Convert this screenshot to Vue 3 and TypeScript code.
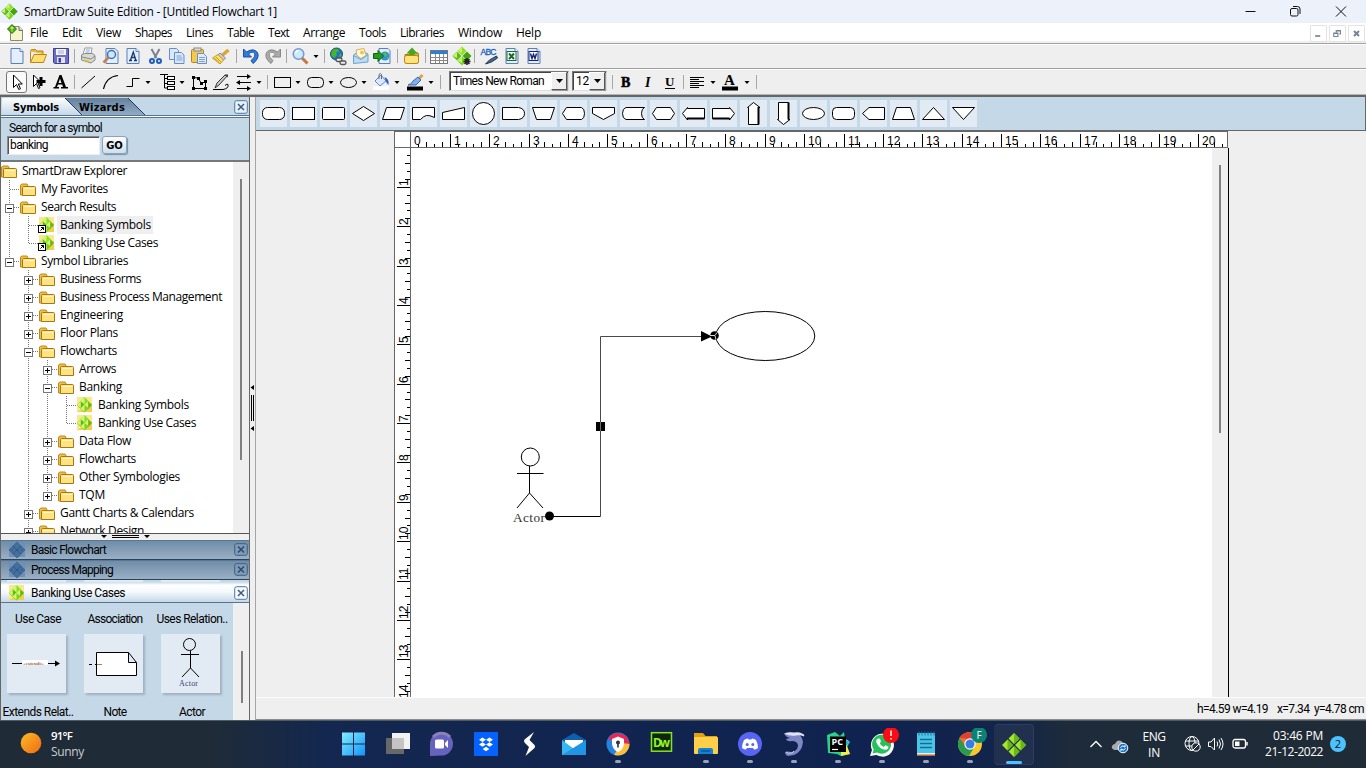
<script setup lang="ts">
interface Tool { i: string; w: number }
interface Row { g: string; icon: string; t: string; w: number; e?: string; sel?: boolean }

// Spreads a label over a known width by adjusting its letter spacing.
const vFit = {
  mounted(el: HTMLElement, b: { value: number }) {
    const n = (el.textContent || '').trim().length
    const natural = el.getBoundingClientRect().width
    el.style.letterSpacing = ((b.value - natural) / n).toFixed(3) + 'px'
  },
}

const menus: [string, number][] = [
  ['File', 18], ['Edit', 20], ['View', 25], ['Shapes', 37], ['Lines', 27], ['Table', 27],
  ['Text', 21], ['Arrange', 42], ['Tools', 27], ['Libraries', 44], ['Window', 44], ['Help', 25],
]

const page = '<path d="M5 3.500h9l3 3V18.500H5z" fill="#e3efff" stroke="#5c7fb8"/><path d="M14 3.500v3h3" fill="#fff" stroke="#5c7fb8"/>'
const folder = '<path d="M2.500 6.500q0-2 2-2h3l1.500 1.500h6v3" fill="#e9b93d" stroke="#b98516"/><path d="M2.500 7v10.500h13l3-8H6l-3 7" fill="#ffdf72" stroke="#b98516"/>'
const diamonds = '<path d="M11 1.500l4.500 4.500-4.500 4.500L6.500 6z" fill="#8ee02c"/><path d="M6 6.500l4.500 4.500L6 15.500 1.500 11z" fill="#5bbd12"/><path d="M16 6.500l4.500 4.500-4.500 4.500-4.500-4.500z" fill="#43a40d"/><path d="M11 11.500l4.500 4.500-4.500 4.500L6.500 16z" fill="#74d41b"/><path d="M11 1.500V8L7 6zM6 6.500V13l-4-2zM11 11.500V18l-4-2z" fill="#c6f36a"/>'

const icons: Record<string, string> = {
  new: page,
  open: folder,
  save: '<path d="M3.500 3.500h15v15h-14l-1-1z" fill="#6b6fc9" stroke="#40408f"/><rect x="6" y="4" width="10" height="6" fill="#f4f4ff"/><path d="M8 6h6M8 8h6" stroke="#aab"/><rect x="7" y="12" width="8" height="6" fill="#dfe3f2"/><rect x="8.500" y="13" width="2.500" height="4.500" fill="#40408f"/>',
  print: '<path d="M6 9l2-6h7l-1 6" fill="#fff" stroke="#999"/><path d="M9 5h4M8.500 7h4" stroke="#79a6dd"/><path d="M4.500 10l3-1.500h8l2.500 2v4.500l-4 3-9.500-3z" fill="#d9d9d4" stroke="#888"/><path d="M5 12l9 2 4-3" fill="none" stroke="#888"/><path d="M7 15l5 1.500" stroke="#e3c32c" stroke-width="1.500"/>',
  preview: '<path d="M6 3.500h9l3 3V18.500H6z" fill="#e3efff" stroke="#5c7fb8"/><circle cx="11.500" cy="9.500" r="4" fill="#c8ecff" stroke="#4a6fae" stroke-width="1.500"/><path d="M8.500 12.500l-5 5" stroke="#c77f4d" stroke-width="2.500"/>',
  fonta: page + '<path d="M7 15.500h3M12 15.500h3M8.500 15l2.800-8 2.500 8M9.500 12.500h3.500" fill="none" stroke="#19356e" stroke-width="1.300"/>',
  cut: '<path d="M7.500 4l5 9M15.500 4l-5 9" stroke="#7a8290" stroke-width="2"/><circle cx="8" cy="16" r="2" fill="none" stroke="#1d5dbb" stroke-width="2"/><circle cx="15" cy="16" r="2" fill="none" stroke="#1d5dbb" stroke-width="2"/>',
  copy: '<path d="M3.500 3.500h7l2 2v9h-9z" fill="#d9e8fd" stroke="#6b8cc0"/><path d="M8.500 7.500h7l2.500 2.500v8.500H8.500z" fill="#d9e8fd" stroke="#6b8cc0"/><path d="M10.500 11h5M10.500 13h6M10.500 15h6" stroke="#7da1d6"/>',
  paste: '<rect x="3.500" y="4.500" width="12" height="13" rx="1" fill="#f3c94f" stroke="#b08320"/><rect x="6" y="3" width="7" height="3" fill="#dcdcdc" stroke="#888"/><path d="M9.500 8.500h6l3 3v7h-9z" fill="#e0ecff" stroke="#6b8cc0"/><path d="M11 12.500h6M11 14.500h6M11 16.500h6" stroke="#7da1d6"/>',
  brush: '<path d="M18.500 5l-6 5" stroke="#d9a72f" stroke-width="3.500"/><path d="M10 8l5.500 5-2 2-5.500-5z" fill="#ccd" stroke="#889"/><path d="M8 9.500l5.500 5.500-3.500 4-7.500-6z" fill="#fbe268" stroke="#c79b23"/><path d="M6 12l5 5M4.500 13l4.500 4.500" stroke="#c79b23"/>',
  undo: '<path d="M3.500 4v8h8l-3-3q4-3.500 6-.5 1.500 3-3.500 7l2 3q7-5.500 4.500-11-4-5-11-.5z" fill="#347bd4" stroke="#1754a5"/>',
  redo: '<path d="M18.500 4v8h-8l3-3q-4-3.500-6-.5-1.500 3 3.500 7l-2 3q-7-5.500-4.500-11 4-5 11-.5z" fill="#aaa" stroke="#888"/>',
  mag: '<path d="M12.500 12.500l6 6" stroke="#c9763c" stroke-width="3"/><circle cx="9.500" cy="9" r="5.300" fill="#c7ecff" stroke="#7e96cd" stroke-width="1.500"/><path d="M6.500 8q1-2.500 3-2.500" stroke="#fff" fill="none" stroke-width="1.500"/>',
  globe: '<circle cx="8.500" cy="9" r="6" fill="#2474c5" stroke="#155"/><path d="M4 6q2-3 6-2l1 2-3 2 1 2-3 3-3-3zM12 8l2 2-3 3z" fill="#46b332"/><g fill="#eee" stroke="#555" stroke-width="1.300"><rect x="8" y="13" width="6" height="3.500" rx="1.700"/><rect x="12" y="16" width="6" height="3.500" rx="1.700"/></g>',
  mail: '<path d="M3.500 10l7-5 7.500 4v8l-14.500 1.500z" fill="#b9dcf8" stroke="#739fca"/><path d="M6 5l8-1.500 2 7-5 3-4-3z" fill="#fffbe0" stroke="#d8b060"/><circle cx="12" cy="7.500" r="2" fill="#f6c145"/><path d="M3.500 10.500l7.500 4 7-5" fill="none" stroke="#739fca"/>',
  export: '<path d="M7 3.500h9l2 2V18.500H7z" fill="#e3efff" stroke="#5c7fb8"/><circle cx="13" cy="11" r="4.500" fill="#338fe0"/><path d="M11 9l3-2 1 3-2 2zM15 12l2 1-2 2z" fill="#54bf43"/><path d="M1.500 8.500h4.500v-3l5.500 5.500-5.500 5.500v-3h-4.500z" fill="#229b1f" stroke="#0c610f"/>',
  upfold: '<path d="M4 9.500h4l1-2h6.500q2 0 2 2v7q0 2-2 2H6q-2 0-2-2z" fill="#e0ad2f" stroke="#a97c12"/><rect x="3.500" y="10.500" width="14" height="8" rx="2" fill="#ffe37a" stroke="#b98516"/><path d="M5.500 8.500l5.500-6 5.500 6h-3V10H8.500V8.500z" fill="#47a61e"/>',
  table: '<rect x="2.500" y="5.500" width="17" height="13" fill="#fff" stroke="#777"/><rect x="3" y="6" width="16" height="3" fill="#2c7fd9"/><path d="M3 12.500h16M3 15.500h16M7.500 9v9M11.500 9v9M15.500 9v9" stroke="#888"/>',
  green: diamonds + '<path d="M13.500 14l5 5M18.500 14l-5 5M16 13v7M12.500 16.500h7" stroke="#222" stroke-width="1.600"/>',
  abc: '<text x="2.500" y="10" font-size="8.500" font-family="Liberation Sans" fill="#1463be" textLength="16" stroke="#1463be" stroke-width=".3">ABC</text><path d="M18.500 11l-7 4-4 4 6-2 6-4z" fill="#456c99" stroke="#234"/>',
  excel: page + '<rect x="6" y="6.500" width="9" height="9" fill="#fff" stroke="#176b2c"/><path d="M8 8.500l5 5.500M13 8.500l-5 5.500" stroke="#176b2c" stroke-width="2"/>',
  word: page + '<rect x="6" y="6.500" width="9" height="9" fill="#fff" stroke="#17267c"/><path d="M7.500 8.500l1.500 5 1.500-4 1.500 4 1.500-5" fill="none" stroke="#17267c" stroke-width="1.500"/>',
  caret: '<path d="M8.500 10h5l-2.500 3z"/>',
  sep: '<path d="M11.500 4v14" stroke="#a6a6a6"/>',
  ptr: '<rect x=".5" y=".5" width="20" height="21" rx="2.500" fill="#fafafa" stroke="#777"/><path d="M7.500 4v12.500l3-3 2.300 5 1.700-.8-2.200-4.700h4z" fill="#fff" stroke="#000"/>',
  ptrplus: '<path d="M5.500 4v11.500l3-3 2 5 1.500-.7-2-4.800h3.500z" fill="#fff" stroke="#000"/><path d="M13 6v9M8.500 10.500h9" stroke="#000" stroke-width="3"/>',
  bigA: '<path d="M11.500 4l4.500 12h2v1.500h-7V16h2l-.8-2.500H8L7 16h2v1.500H3.500V16H5l4.500-12zM10 7.500L8.500 12h3z"/>',
  line: '<path d="M4.500 17L18 5" stroke="#000"/>',
  arc: '<path d="M3.500 18Q6 6 18 4.500" fill="none" stroke="#000" stroke-width="1.200"/>',
  conn: '<path d="M4.500 15.500h6v-8h7" fill="none" stroke="#000"/>',
  tree: '<g fill="#fff" stroke="#000" transform="translate(4 0)"><path d="M2 3.500h8M6.500 4v13h5M6.500 7.500h3M6.500 12.500h3" fill="none"/><rect x="9.500" y="5.500" width="7" height="3"/><rect x="9.500" y="10.500" width="7" height="3"/><rect x="9.500" y="15.500" width="7" height="3"/></g>',
  poly: '<path d="M5.500 6.500v11h12v-7l-4 2L10 7z" fill="none" stroke="#000"/><rect x="4" y="5" width="3" height="3"/><rect x="4" y="16" width="3" height="3"/><rect x="9" y="6" width="3" height="3"/><rect x="12" y="11" width="3" height="3"/><rect x="16" y="9" width="3" height="3"/><rect x="16" y="16" width="3" height="3"/>',
  pen: '<path d="M17 4L8 14l-4 3 2-5 8-8zM14 4l3 2" fill="#ccc" stroke="#333"/><path d="M2 18.500h10q6-1 5-5-1-1-3 1" fill="none" stroke="#000"/>',
  arrows: '<path d="M4 5.500h13M4 11.500h14M4 17.500h13" stroke="#000"/><path d="M14 3l4 2.500L14 8zM7 9l-4 2.500L7 14zM14 15l4 2.500-4 2.500z"/>',
  rect: '<rect x="3.500" y="6.500" width="16" height="10" fill="none" stroke="#000"/>',
  rrect: '<rect x="3.500" y="6.500" width="16" height="10" rx="4" fill="none" stroke="#000"/>',
  oval: '<ellipse cx="11.500" cy="11.500" rx="8" ry="5" fill="none" stroke="#000"/>',
  bucket: '<rect x="3" y="15" width="16" height="4" fill="#fff"/><path d="M5 10l6-6 5 6-6 5z" fill="#d9e8fb" stroke="#6288c4"/><path d="M9 8V3.500q1.500-2 2.500 0V8" fill="none" stroke="#667"/><path d="M14.500 6q5 2 4 8-2-1-3-5z" fill="#2b5fc4"/>',
  inkpen: '<rect x="3" y="15.500" width="16" height="4"/><path d="M18.500 4l-4 4" stroke="#d8a444" stroke-width="3"/><path d="M14 6l3 3-5 5H4q4-1 5-4z" fill="#7fb0f0" stroke="#3767b1"/>',
  B: '<text x="6" y="16" font-family="Liberation Serif" font-weight="bold" font-size="14" stroke="#000" stroke-width=".5">B</text>',
  I: '<text x="8" y="16" font-family="Liberation Serif" font-weight="bold" font-style="italic" font-size="14">I</text>',
  U: '<text x="6" y="15" font-family="Liberation Serif" font-weight="bold" font-size="13">U</text><path d="M6 17.500h10" stroke="#000"/>',
  align: '<path d="M4 6.500h14M4 8.500h9M4 10.500h14M4 12.500h9M4 14.500h14M4 16.500h9" stroke="#000"/>',
  fontcol: '<text x="5" y="14" font-family="Liberation Serif" font-weight="bold" font-size="15">A</text><rect x="3" y="15.500" width="16" height="4"/>',
}

const tools = (s: string): Tool[] => s.split(' ').map((p) => {
  const [i, w] = p.split(':')
  return { i, w: Number(w) }
})
const bar1 = tools('new:22 open:22 save:22 sep:4 print:24 preview:22 fonta:22 cut:22 copy:22 paste:22 brush:22 sep:8 undo:22 redo:22 sep:4 mag:24 caret:8 sep:8 globe:22 mail:22 export:22 sep:6 upfold:24 sep:2 table:26 green:20 sep:4 abc:26 excel:20 word:24')
const bar2 = tools('ptr:22 ptrplus:22 bigA:22 sep:4 line:24 arc:22 conn:22 caret:8 tree:26 caret:8 poly:26 pen:20 arrows:24 caret:6 sep:10 rect:20 caret:12 rrect:22 caret:10 oval:24 caret:8 bucket:26 caret:6 inkpen:30 caret:2 sep:16')
const bar3 = tools('sep:8 B:20 I:24 U:20 sep:6 align:22 caret:10 fontcol:24 caret:10 sep:8')

const S = 'fill="#fff" stroke="#000"'
const shapes: string[] = [
  `<rect x="2.500" y="7.500" width="22" height="12" rx="5" ${S}/>`,
  `<rect x="2.500" y="7.500" width="22" height="12" ${S}/>`,
  `<rect x="2.500" y="7.500" width="22" height="12" rx="1" ${S}/>`,
  `<path d="M2.500 13.500l11-7 11 7-11 7z" ${S}/>`,
  `<path d="M6.500 7.500h18l-4 12h-18z" ${S}/>`,
  `<path d="M2.500 7.500h22v10q-5-2.500-8-2t-6 4h-8z" ${S}/>`,
  `<path d="M2.500 12.500l22-5v12h-22z" ${S}/>`,
  `<circle cx="13.500" cy="13.500" r="11" ${S}/>`,
  `<path d="M2.500 7.500h16q6 1 6 6t-6 6h-16z" ${S}/>`,
  `<path d="M2.500 7.500h22l-4 12h-14z" ${S}/>`,
  `<path d="M6.500 7.500h15q3 1 3 6t-3 6h-15l-4-6z" ${S}/>`,
  `<path d="M2.500 7.500h22v6l-11 6-11-6z" ${S}/>`,
  `<path d="M6 7.500h18.500q-3 1-3 6t3 6H6q-3.500-1-3.500-6t3.500-6z" ${S}/>`,
  `<path d="M6.500 7.500h14l4 6-4 6h-14l-4-6z" ${S}/>`,
  `<path d="M24.500 8.500v10h-17v1.500l-5-6.500 5-6v1z" ${S}/><path d="M7 18.500h17.500" stroke="#000" stroke-width="2"/>`,
  `<path d="M2.500 8.500v10h17v1.500l5-6.500-5-6v1z" ${S}/><path d="M2.500 18.500h17" stroke="#000" stroke-width="2"/>`,
  `<path d="M8.500 24.500h10v-17h1.500l-6.500-5-6 5h1z" ${S}/><path d="M18.500 7v17.500" stroke="#000" stroke-width="2"/>`,
  `<path d="M8.500 2.500h10v17h1.500l-6.500 5-6-5h1z" ${S}/><path d="M18.500 2.500v17" stroke="#000" stroke-width="2"/>`,
  `<ellipse cx="13.500" cy="13.500" rx="11" ry="6" ${S}/>`,
  `<rect x="2.500" y="7.500" width="22" height="12" rx="4" ${S}/>`,
  `<path d="M9 7.500h15.500v12H9l-6.500-6z" ${S}/>`,
  `<path d="M6.500 7.500h14l4 12h-22z" ${S}/>`,
  `<path d="M13.500 7.500l11 12h-22z" ${S}/>`,
  `<path d="M2.500 7.500h22l-11 12z" ${S}/>`,
]

// Guide characters: "|" through line, "t" tee, "l" elbow, " " blank.
const tree: Row[] = [
  { g: '', icon: 'f', t: 'SmartDraw Explorer', w: 105 },
  { g: 't', icon: 'f', t: 'My Favorites', w: 67 },
  { g: 't', icon: 'f', t: 'Search Results', w: 75, e: '-' },
  { g: '|t', icon: 's', t: 'Banking Symbols', w: 91, sel: true },
  { g: '|l', icon: 's', t: 'Banking Use Cases', w: 98 },
  { g: 'l', icon: 'f', t: 'Symbol Libraries', w: 87, e: '-' },
  { g: ' t', icon: 'f', t: 'Business Forms', w: 81, e: '+' },
  { g: ' t', icon: 'f', t: 'Business Process Management', w: 162, e: '+' },
  { g: ' t', icon: 'f', t: 'Engineering', w: 63, e: '+' },
  { g: ' t', icon: 'f', t: 'Floor Plans', w: 58, e: '+' },
  { g: ' t', icon: 'f', t: 'Flowcharts', w: 57, e: '-' },
  { g: ' |t', icon: 'f', t: 'Arrows', w: 37, e: '+' },
  { g: ' |t', icon: 'f', t: 'Banking', w: 43, e: '-' },
  { g: ' ||t', icon: 'd', t: 'Banking Symbols', w: 91 },
  { g: ' ||l', icon: 'd', t: 'Banking Use Cases', w: 98 },
  { g: ' |t', icon: 'f', t: 'Data Flow', w: 52, e: '+' },
  { g: ' |t', icon: 'f', t: 'Flowcharts', w: 57, e: '+' },
  { g: ' |t', icon: 'f', t: 'Other Symbologies', w: 101, e: '+' },
  { g: ' |l', icon: 'f', t: 'TQM', w: 26, e: '+' },
  { g: ' t', icon: 'f', t: 'Gantt Charts & Calendars', w: 134, e: '+' },
  { g: ' t', icon: 'f', t: 'Network Design', w: 84, e: '+' },
]
const libIcon = '<rect x="1" y="1" width="15" height="15" fill="#f9e88c"/><path d="M1 16l15-9v9z" fill="#f3ce4c"/><path d="M8.500 1l4 4-4 4-4-4z" fill="#8fdc28"/><path d="M4.800 5l3.700 4-3.700 4L1 9z" fill="#62b817"/><path d="M12.200 5L16 9l-3.800 4-3.700-4z" fill="#62b817"/><path d="M8.500 8.500l4 4-4 4-4-4z" fill="#7fd01f"/><path d="M8.500 1v7l-4-3zM4.800 5v7L1 9zM12.200 5v7L8.500 9zM8.500 8.500v7l-4-3z" fill="#d0f86e"/>'
const treeIcons: Record<string, string> = {
  f: '<path d="M1.500 5V15h13V6.500h-5L8 4H3z" fill="#f0bf45" stroke="#b98a20"/><path d="M3.500 15.500v-8q0-1 1-1h11q1 0 1 1v8z" fill="#ffe381" stroke="#a87714"/><path d="M5 8.500h10" stroke="#fff7c9"/>',
  d: libIcon,
  s: libIcon + '<rect x=".5" y="9.500" width="7" height="7" fill="#fff" stroke="#000"/><path d="M2.500 14.500L5.500 11.500M3 11.500h2.500V14" fill="none" stroke="#000"/>',
}

const P = 39.37
const hTicks = Array.from({ length: 103 }, (_, k) => k + 1)
const vTicks = Array.from({ length: 69 }, (_, k) => k + 1)
const tickLen = (k: number) => (k % 5 === 0 ? 13 : (k % 5) % 2 ? 3 : 5)
const pos = (k: number) => Math.floor((k * P) / 5) + 0.5

const apps: { i: string; run?: boolean; on?: boolean }[] = [
  { i: '<defs><linearGradient id="wn" gradientUnits="userSpaceOnUse" x1="4" y1="4" x2="28" y2="28"><stop offset="0" stop-color="#84efff"/><stop offset="1" stop-color="#0f90f8"/></linearGradient></defs><path d="M4 4.500h11v11H4zM16 4.500h11v11H16zM4 16.500h11v11H4zM16 16.500h11v11H16z" fill="url(#wn)"/>' },
  { i: '<rect x="4" y="10" width="18" height="16" fill="#686868"/><rect x="10" y="5" width="18" height="16" fill="#f1f1f1"/><rect x="10" y="10" width="12" height="11" fill="#c4c4c4"/>' },
  { i: '<path d="M4 28V16A11.500 11.500 0 1 1 15.500 27.500z" fill="#6762bd"/><path d="M7 9a11.500 11.500 0 0 1 17 0" fill="none" stroke="#8d7fb8" stroke-width="3"/><rect x="9" y="11.500" width="9" height="9" rx="1.500" fill="#fff"/><path d="M19 15l3-3v8l-3-3z" fill="#fff"/>' },
  { i: '<rect x="4" y="4" width="24" height="24" fill="#0662ff"/><path d="M12.500 9.500l3.500 2.300-3.500 2.300L9 11.800zM19.500 9.500l3.500 2.300-3.500 2.300-3.500-2.300zM12.500 14.200l3.500 2.300-3.500 2.300L9 16.500zM19.500 14.200l3.500 2.300-3.500 2.300-3.500-2.300zM16 18.800l3.400 2.200-3.400 2.200-3.400-2.200z" fill="#fff"/>' },
  { i: '<path d="M20 4l-9.500 7.500q-1 1.500 0 3l4.500 4.500-3.500 9 9-8q1.200-1.500 0-3L15.500 12z" fill="#fff"/><path d="M10.500 17l3.500 2.500-3 2" fill="#12244e"/>' },
  { i: '<path d="M4 12L16 5l12 7v5H4z" fill="#0f5fae"/><path d="M7 12h18v8H7z" fill="#fff"/><path d="M4 12l12 9 12-9v15H4z" fill="#35b7f1"/><path d="M4 27l24-15v15z" fill="#1f95e3"/>' },
  { i: '<circle cx="16" cy="16" r="11.500" fill="#2483dd"/><path d="M6 11A11.500 11.500 0 0 1 27.500 16L20 15z" fill="#e72751"/><path d="M27.500 16A11.500 11.500 0 0 1 12 26.700L20 15z" fill="#ffbe37"/><path d="M10 11l6-2.500 6 2.500v5q-1 6-6 8-5-2-6-8z" fill="#fff"/><circle cx="16" cy="14.500" r="2" fill="#333"/><path d="M15.200 15h1.600v4.500h-1.600z" fill="#333"/>', run: true },
  { i: '<rect x="5.500" y="4.700" width="20" height="18.500" fill="#102608" stroke="#83e51e" stroke-width="1.500"/><text x="7" y="18.500" font-family="Open Sans" font-weight="bold" font-size="12" fill="#91f625" textLength="17">Dw</text>' },
  { i: '<path d="M4 5h9l2.500 3H27v6H4z" fill="#e3a014"/><rect x="4" y="9" width="24" height="17" rx="1" fill="#ffcf49"/><path d="M8 26v-4q0-2 2-2h11q2 0 2 2v4z" fill="#1581d1"/><path d="M11 23h9" stroke="#075a9f" stroke-width="1.500"/>', run: true },
  { i: '<circle cx="16" cy="16" r="12" fill="#5865f2"/><path d="M10 12q2-1.500 4-1.500l.6 1h2.800l.6-1q2 0 4 1.500 2 4 2 8-2 1.500-4 1.500L19 20h-6l-1 1.500q-2 0-4-1.500 0-4 2-8z" fill="#fff"/><circle cx="13.200" cy="16.500" r="1.500" fill="#5865f2"/><circle cx="18.800" cy="16.500" r="1.500" fill="#5865f2"/>', run: true },
  { i: '<path d="M6 6q3-2 9-1 9 0 10 9-1 10-9 13l-6 1q-3-1-3-4 3-1 6 0l3-.5q4-2 4-6.500-1-4-6-4-5 1-6-2l4-1q-4-1-6-4z" fill="#7d87c4"/><path d="M6 5.500q5-2 10-1 5-1 8 1 3 1 2 3-4-2-8-1-6 1-12-2z" fill="#dfe3f8"/><path d="M8 24q2 2 6 1l2-2" stroke="#c3c9ec" fill="none"/>', run: true },
  { i: '<path d="M5 7l8-3 5 4 4-4 1 7 5 3-3 5 3 7-9 2-4-2-9-1z" fill="#28d38c"/><path d="M23 11l4 2-2 5 3 8-9 2V16z" fill="#f4ed4a"/><path d="M24 12l4 2-4 4z" fill="#16bce8"/><rect x="8" y="8.500" width="16" height="15.500" fill="#000"/><text x="9.500" y="17" font-family="Open Sans" font-weight="bold" font-size="9" fill="#fff">PC</text><path d="M10 21.500h6" stroke="#fff" stroke-width="1.200"/>', run: true },
  { i: '<path d="M4 28l2-6A11.500 11.500 0 1 1 10.500 27z" fill="#fff"/><path d="M6.500 25.500l1.200-4A9.500 9.500 0 1 1 11 24.500z" fill="#25c15a"/><path d="M12 10.500l2 .3 1 3-1.300 1.500q1 2.500 4 3.700l1.800-1.700 3 1.500q0 2.500-3 3-6-.3-9-7-1-3 1.500-4.300z" fill="#fff"/><circle cx="25" cy="7" r="8" fill="#f90d12"/><path d="M25 2.500v5.500M25 10v1.500" stroke="#fff" stroke-width="1.500"/>', run: true },
  { i: '<rect x="7" y="5" width="18" height="21" fill="#4ac5e8"/><path d="M7 26h18v2H7z" fill="#b76a32"/><path d="M7 25h18v1.500H7z" fill="#eee"/><path d="M9 3.500v4M12 3.500v4M15 3.500v4M18 3.500v4M21 3.500v4M24 3.500v4" stroke="#14799f"/><path d="M10 11.500h12M10 15.500h12M10 19.500h12" stroke="#126e94" stroke-width="1.500"/>', run: true },
  { i: '<circle cx="16" cy="16" r="12" fill="#f8c92c"/><path d="M5.600 10A12 12 0 0 1 26.400 10L16 11z" fill="#e23e31"/><path d="M5.600 10A12 12 0 0 0 15 28l5.500-9.500-9-.5z" fill="#259c4e"/><path d="M5.600 10H16l-5 9z" fill="#e23e31" opacity=".6"/><circle cx="16" cy="16" r="5.700" fill="#fff"/><circle cx="16" cy="16" r="4.500" fill="#397ce8"/><circle cx="25" cy="7" r="8" fill="#0a8375"/><text x="22.500" y="11" font-family="Open Sans" font-size="10" fill="#fff">F</text>', run: true },
  { i: '<path d="M16 4l5.500 5.500L16 15l-5.500-5.500zM9.500 10.500L15 16l-5.500 5.500L4 16zM22.500 10.500L28 16l-5.500 5.500L17 16zM16 17l5.500 5.500L16 28l-5.500-5.500z" fill="#a4e629"/><path d="M16 4l5.500 5.500L16 15zM9.500 10.500L15 16l-5.500 5.500zM22.500 10.500L28 16l-5.500 5.500zM16 17l5.500 5.500L16 28z" fill="#66ba13"/>', on: true },
]
</script>

<template>
  <div class="screen">
    <header class="title">
      <svg class="logo" viewBox="0 0 22 22" v-html="diamonds" />
      <span v-fit="253">SmartDraw Suite Edition - [Untitled Flowchart 1]</span>
      <svg class="winbtns" width="120" height="22" viewBox="0 0 120 22" fill="none" stroke="#111">
        <path d="M3.500 10.500h10M94 5.500l10 10M104 5.500l-10 10" />
        <rect x="48.500" y="7.500" width="7.500" height="7.500" rx="1.500" />
        <path d="M51 5.500h4.500q2.500 0 2.500 2.500v5" />
      </svg>
    </header>

    <nav class="menu">
      <svg class="docicon" width="18" height="18" viewBox="0 0 18 18">
        <path d="M3.500 2.500h8.500l3.500 3.500v10.500h-12z" fill="#f8f5ce" stroke="#8a8a74" /><path d="M12 2.500v4h3.500" fill="#ddd" stroke="#6f6f5a" />
        <path d="M5 .5L9.500 5 5 9.500.5 5z" fill="#4fae16" stroke="#2d6f0c" /><path d="M3 4l2-2 2 2-2 2zM4 7l1-1 1 1-1 1z" fill="#b4ec5a" />
      </svg>
      <span v-for="m in menus" :key="m[0]" v-fit="m[1]" class="mi">{{ m[0] }}</span>
      <div class="mdi">
        <svg viewBox="0 0 18 18"><path d="M5 12h6" stroke="#71849a" stroke-width="2" /></svg>
        <svg viewBox="0 0 18 18"><path d="M7.500 8V5.500h5v4H11M7 6h6" fill="none" stroke="#71849a" stroke-width="1.300" /><path d="M4.500 8.500h5v4h-5zM4 9h6" fill="none" stroke="#71849a" stroke-width="1.300" /></svg>
        <svg viewBox="0 0 18 18"><path d="M6 6l6 6M12 6l-6 6" stroke="#71849a" stroke-width="2.300" /></svg>
      </div>
    </nav>

    <div class="bar one">
      <span v-for="(t, n) in bar1" :key="n" class="tool" :style="{ width: t.w + 'px' }">
        <svg width="22" height="22" viewBox="0 0 22 22" v-html="icons[t.i]" />
      </span>
    </div>
    <div class="bar two">
      <span v-for="(t, n) in bar2" :key="n" class="tool" :style="{ width: t.w + 'px' }">
        <svg width="22" height="22" viewBox="0 0 22 22" v-html="icons[t.i]" />
      </span>
      <div class="combo face"><span v-fit="91">Times New Roman</span><i><svg width="9" height="5"><path d="M1 0h7L4.500 4z" /></svg></i></div>
      <div class="combo size"><span v-fit="13">12</span><i><svg width="9" height="5"><path d="M1 0h7L4.500 4z" /></svg></i></div>
      <span v-for="(t, n) in bar3" :key="n" class="tool" :style="{ width: t.w + 'px' }">
        <svg width="22" height="22" viewBox="0 0 22 22" v-html="icons[t.i]" />
      </span>
    </div>

    <main class="work">
      <aside class="left">
        <div class="tabs">
          <svg width="249" height="21" viewBox="0 0 249 21">
            <defs>
              <linearGradient id="ta" x2="0" y2="1"><stop offset="0" stop-color="#fbfdff" /><stop offset="1" stop-color="#c5d8e7" /></linearGradient>
              <linearGradient id="tb" x2="0" y2="1"><stop offset="0" stop-color="#64829e" /><stop offset="1" stop-color="#92abc1" /></linearGradient>
            </defs>
            <path d="M62 1h65l17 17H82z" fill="url(#tb)" /><path d="M127 1l17 17" stroke="#1d3d5c" />
            <path d="M1 18V2l1-1h62l17 17z" fill="url(#ta)" /><path d="M64 1l17 17" stroke="#1d3d5c" />
            <path d="M0 18.500h249" stroke="#557594" /><path d="M0 19.500h249" stroke="#fff" /><path d="M0 20.500h249" stroke="#557594" />
          </svg>
          <div class="tablabels">
            <b v-fit="46">Symbols</b><b v-fit="46" class="second">Wizards</b>
            <svg class="x" viewBox="0 0 14 14"><rect x=".7" y=".7" width="12.600" height="12.600" rx="2" fill="#e7f1fa" stroke="#55779a" /><path d="M4 4l6 6M10 4l-6 6" stroke="#345d86" stroke-width="1.500" /></svg>
          </div>
        </div>
        <div class="search pix">
          <span v-fit="93">Search for a symbol</span>
          <div class="field"><div class="input"><span v-fit="38">banking</span></div><b class="go">GO</b></div>
        </div>
        <div class="tree">
          <div class="rows">
            <div v-for="(r, n) in tree" :key="n" class="row">
              <svg v-for="(c, k) in r.g.split('')" :key="k" width="19" height="18" viewBox="0 0 19 18">
                <g stroke="#777" stroke-dasharray="1 1" fill="none">
                  <path v-if="c === '|' || c === 't'" d="M9.500 0v18" />
                  <path v-if="c === 'l'" d="M9.500 0v10" />
                  <path v-if="c === 't' || c === 'l'" d="M10 9.500h9" />
                </g>
                <g v-if="r.e && k === r.g.length - 1">
                  <rect x="5.500" y="6.500" width="8" height="8" fill="#fff" stroke="#777" />
                  <path d="M7 10.500h5" stroke="#000" /><path v-if="r.e === '+'" d="M9.500 8v5" stroke="#000" />
                </g>
              </svg>
              <svg width="19" height="18" viewBox="0 0 19 18" v-html="treeIcons[r.icon]" />
              <span class="lab" :class="{ sel: r.sel }"><span v-fit="r.w">{{ r.t }}</span></span>
            </div>
          </div>
          <div class="scroll"><div class="thumb" /></div>
        </div>
        <div class="hsplit">
          <svg width="60" height="6" viewBox="0 0 60 6"><path d="M3 1h6L6 4zM46 1h6l-3 3z" /><path d="M14 1.500h27M14 3.500h27" stroke="#000" /></svg>
        </div>
        <div v-for="h in [['Basic Flowchart', 75], ['Process Mapping', 82]] as [string, number][]" :key="h[0]" class="lib pix">
          <svg width="18" height="18" viewBox="0 0 18 18">
            <rect x="1" y="1" width="16" height="15" fill="#6c91b5" /><path d="M9 1l4 4-4 4-4-4zM5 5l4 4-4 4-4-4zM13 5l4 4-4 4-4-4zM9 9l4 4-4 4-4-4z" fill="#42709f" stroke="#2f567f" stroke-width=".6" /><path d="M3 9h2M13 9h2" stroke="#624d9a" stroke-width="2" />
          </svg>
          <span v-fit="h[1]">{{ h[0] }}</span>
          <svg class="x" viewBox="0 0 14 14"><rect x=".7" y=".7" width="12.600" height="11.600" rx="2" fill="#7e9bb7" stroke="#3f5f80" /><path d="M4 3.500l6 6M10 3.500l-6 6" stroke="#2c4a69" stroke-width="1.500" /></svg>
        </div>
        <div class="sliver"><i /><i /><i /></div>
        <div class="lib open pix">
          <svg width="18" height="18" viewBox="0 0 18 18" v-html="libIcon" />
          <span v-fit="94">Banking Use Cases</span>
          <svg class="x" viewBox="0 0 14 14"><rect x=".7" y=".7" width="12.600" height="12.600" rx="2" fill="#f3f9ff" stroke="#55779a" /><path d="M4 4l6 6M10 4l-6 6" stroke="#345d86" stroke-width="1.500" /></svg>
        </div>
        <div class="symbols pix">
          <div class="grid">
            <span class="cap"><span v-fit="46">Use Case</span></span>
            <span class="cap"><span v-fit="55">Association</span></span>
            <span class="cap"><span v-fit="71">Uses Relation..</span></span>
            <div class="cell">
              <svg width="59" height="59" viewBox="0 0 59 59"><path d="M5 29.500h45" stroke="#000" /><path d="M48 26.500l5 3-5 3z" /><rect x="15" y="26" width="26" height="5" fill="#fff" /><text x="16" y="30.500" font-size="5" textLength="21" lengthAdjust="spacingAndGlyphs" fill="#a5643c" font-weight="bold" font-family="Liberation Serif">«extends»</text></svg>
            </div>
            <div class="cell">
              <svg width="59" height="59" viewBox="0 0 59 59"><path d="M5 30.500h3M11 30.500h3" stroke="#000" /><path d="M12.500 18.500h32l8 10v13h-40zM44.500 18.500v10h8" fill="#fff" stroke="#000" /><path d="M13 30.500h5" stroke="#b57d55" /></svg>
            </div>
            <div class="cell">
              <svg width="59" height="59" viewBox="0 0 59 59"><g fill="none" stroke="#000"><circle cx="28.500" cy="10.500" r="6" /><path d="M29.500 17v17M20 20.500h18M29.500 34L21 43M29.500 34l8.500 9" /></g><text x="18" y="52" font-size="8" textLength="19" fill="#347" font-family="Liberation Serif">Actor</text></svg>
            </div>
            <span class="cap low"><span v-fit="71">Extends Relat..</span></span>
            <span class="cap low"><span v-fit="23">Note</span></span>
            <span class="cap low"><span v-fit="26">Actor</span></span>
          </div>
          <div class="scroll"><div class="thumb short" /></div>
        </div>
      </aside>

      <div class="vsplit">
        <svg width="6" height="50" viewBox="0 0 6 50"><path d="M4 2v5L.5 4.500zM4 43v5L.5 45.500z" /><path d="M1.500 12v26M3.500 12v26" stroke="#000" /></svg>
      </div>

      <section class="right">
        <div class="palette">
          <svg v-for="(s, n) in shapes" :key="n" width="27" height="27" viewBox="0 0 27 27" v-html="s" />
        </div>
        <div class="doc">
          <div class="sheet">
            <div class="hruler">
              <div class="corner" />
              <svg width="816" height="15" viewBox="0 0 816 15">
                <path v-for="k in hTicks" :key="k" :d="`M${pos(k)} ${15 - tickLen(k)}V15`" stroke="#000" />
                <text v-for="k in 21" :key="'n' + k" :x="Math.floor((k - 1) * P) + (k > 1 ? 4 : 3)" y="12.500">{{ k - 1 }}</text>
              </svg>
            </div>
            <div class="body">
              <svg class="vruler" width="16" height="549" viewBox="0 0 16 549">
                <path v-for="k in vTicks" :key="k" :d="`M${15 - tickLen(k)} ${pos(k)}H15`" stroke="#000" />
                <text v-for="k in 14" :key="'n' + k" :transform="`translate(12.500 ${Math.floor(k * P) - 1}) rotate(-90)`">{{ k }}</text>
                <path d="M15.500 0v549" stroke="#666" />
              </svg>
              <svg class="canvas" width="801" height="549" viewBox="411 148 801 549">
                <g fill="none" stroke="#000">
                  <ellipse cx="765.300" cy="336" rx="49.500" ry="24.500" />
                  <path d="M549 516.500h51.500" />
                  <path d="M600.500 516.500V336.500h103" stroke="#4a4a4a" />
                  <circle cx="530.300" cy="457" r="9" />
                  <path d="M529.500 466v27M517 473.500h26.500M529.500 493l-12.500 15M529.500 493l13.500 15" />
                </g>
                <path d="M701 331v10.500l11-5z" />
                <circle cx="714.500" cy="335.500" r="4.300" /><path d="M710 335.500h5l2-3M715 336l1 3.500" stroke="#ddd" fill="none" />
                <rect x="596" y="422" width="9" height="9" /><path d="M600.500 422v9" stroke="#707070" />
                <circle cx="549.500" cy="516" r="4.500" />
                <text x="513" y="521.500" textLength="32" font-size="13.300" fill="#333" font-family="Liberation Serif">Actor</text>
              </svg>
              <div class="docscroll"><div class="dthumb" /></div>
            </div>
          </div>
        </div>
        <div class="status pix"><span v-fit="71">h=4.59 w=4.19</span><span v-fit="87">x=7.34&nbsp; y=4.78 cm</span></div>
      </section>
    </main>

    <footer class="task">
      <div class="weather">
        <svg width="22" height="22" viewBox="0 0 22 22"><defs><linearGradient id="sun" x2="1" y2="1"><stop offset="0" stop-color="#f9bd2c" /><stop offset="1" stop-color="#f2690f" /></linearGradient></defs><circle cx="11" cy="11" r="10.300" fill="url(#sun)" /></svg>
        <div><b v-fit="21">91°F</b><span v-fit="33">Sunny</span></div>
      </div>
      <div class="apps">
        <div v-for="(a, n) in apps" :key="n" class="app" :class="{ on: a.on, run: a.run }">
          <svg width="36" height="32" viewBox="-2 0 36 32" v-html="a.i" /><i />
        </div>
      </div>
      <div class="tray">
        <svg class="chev" width="14" height="10" viewBox="0 0 14 10"><path d="M1.500 8L7 2.500 12.500 8" fill="none" stroke="#fff" stroke-width="1.300" /></svg>
        <svg class="cloud" width="18" height="16" viewBox="0 0 18 16"><path d="M4 12Q0 11 1 8q1-2 3-2 2-5 6-3 2 1 2 3 4 0 4 4l-1 2z" fill="#aaa" /><circle cx="12" cy="10" r="4.800" fill="#1d76c9" stroke="#fff" /><path d="M9.500 9.500q2-3 4.500-.5v-2M14.500 10.500q-2 3-4.500.5v2" fill="none" stroke="#fff" /></svg>
        <div class="lang"><span v-fit="23">ENG</span><span v-fit="12">IN</span></div>
        <svg class="net" width="18" height="18" viewBox="0 0 18 18" fill="none" stroke="#fff"><circle cx="8" cy="8.500" r="7" /><ellipse cx="8" cy="8.500" rx="3" ry="7" /><path d="M1.500 6h13M1.500 11h7" /><circle cx="12" cy="12" r="4.200" fill="#1f2b38" /><path d="M9 15l6-6" /></svg>
        <svg class="vol" width="18" height="16" viewBox="0 0 18 16" fill="none" stroke="#fff"><path d="M1.500 6h2.500l3.500-4v12L4 10.500H1.500zM10 5.500q1.500 2.500 0 5M12 3.500q3 4.500 0 9M14 2q4 6 0 12" /></svg>
        <svg class="bat" width="17" height="12" viewBox="0 0 17 12"><rect x="1" y="1.500" width="12.500" height="8.500" rx="2" fill="none" stroke="#fff" stroke-width="1.300" /><rect x="3" y="3.500" width="4.500" height="4.500" fill="#fff" /><path d="M15 4v3.500" stroke="#fff" stroke-width="1.500" /></svg>
        <div class="clock"><span v-fit="50">03:46 PM</span><span v-fit="58">21-12-2022</span></div>
        <b class="count">2</b>
      </div>
    </footer>
  </div>
</template>

<style>
html, body { margin: 0; overflow: hidden; }
</style>

<style scoped>
* { box-sizing: border-box; }
.screen { width: 1366px; height: 768px; display: flex; flex-direction: column; overflow: hidden; background: #efefef; color: #000; font: 12px/16px "Open Sans", "Noto Sans", sans-serif; white-space: nowrap; }
svg { display: block; flex: none; }
span, b { flex: none; }
.pix { font-family: Roboto, "Open Sans", sans-serif; }
.title { height: 23px; flex: none; background: #edf2fa; display: flex; align-items: center; }
.logo { width: 19px; height: 19px; margin-right: 5px; }
.winbtns { margin-left: auto; width: 120px; margin-right: 4px; }
.menu { height: 22px; flex: none; background: #fff; border-bottom: 1px solid #fff; box-shadow: inset 0 -1px #a0a0a0, inset 0 -3px #f0f0f0; display: flex; padding: 2px 0 0 7px; }
.docicon { margin-right: 5px; margin-top: -1px; }
.mi { margin-right: 14px; height: 16px; }
.mdi { margin-left: auto; display: flex; gap: 2px; padding-right: 1px; }
.mdi svg { width: 17px; height: 17px; border: 1px solid #e3e3e3; border-radius: 1px; }
.bar { flex: none; display: flex; padding-left: 6px; background: #efefef; }
.tool { flex: none; display: flex; justify-content: center; }
.tool svg { overflow: visible; }
.one { height: 25px; border-bottom: 1px solid #fff; box-shadow: inset 0 -1px #a0a0a0; }
.two { height: 27px; padding-top: 1px; border-bottom: 2px solid #666; box-shadow: inset 0 -1px #b5b5b5; }
.combo { height: 20px; background: #fff; border: 1px solid #777; border-right-color: #ddd; border-bottom-color: #ddd; box-shadow: inset 1px 1px #444; display: flex; padding-left: 3px; font: 12px/18px Roboto, "Liberation Sans", sans-serif; }
.combo i { margin-left: auto; width: 16px; background: #efefef; border: 1px solid #fff; border-right-color: #555; border-bottom-color: #555; box-shadow: 1px 1px #999; margin-right: 1px; display: flex; align-items: center; justify-content: center; }
.face { width: 120px; margin: 0 3px 0 1px; }
.size { width: 35px; margin-right: 1px; }
.work { height: 623px; flex: none; display: flex; }
.left { width: 250px; display: flex; flex-direction: column; border-left: 1px solid #666; border-right: 1px solid #666; background: #c5d8e7; overflow: hidden; }
.tabs { height: 21px; flex: none; display: grid; }
.tabs > * { grid-area: 1 / 1; }
.tablabels { display: flex; align-items: center; padding: 2px 0 1px 12px; font: bold 11px/16px "DejaVu Sans Condensed", "DejaVu Sans", sans-serif; }
.second { margin-left: 20px; }
.x { width: 14px; height: 14px; margin-left: auto; margin-right: 2px; }
.tablabels .x { margin-top: -3px; }
.search { height: 44px; flex: none; border-bottom: 2px solid #777; padding: 3px 0 0 8px; line-height: 15px; }
.search > span { display: inline-block; }
.field { display: flex; gap: 2px; margin-left: -2px; }
.input { width: 93px; height: 19px; background: #fff; border: 1px solid #8a8a8a; border-right-color: #eee; border-bottom-color: #eee; box-shadow: inset 1px 1px #555; padding-left: 2px; line-height: 17px; }
.go { width: 25px; height: 18px; border-radius: 3px; background: linear-gradient(#fff, #cfdfed); border: 1px solid #8aa4bb; box-shadow: 1px 1px 1px #7891a8; font: bold 10px/17px "DejaVu Sans", sans-serif; text-align: center; }
.tree { height: 372px; flex: none; background: #fff; display: flex; border-bottom: 1px solid #555; overflow: hidden; }
.rows { flex: 1; overflow: hidden; margin-left: -1px; }
.row { height: 18px; display: flex; }
.lab { height: 18px; line-height: 17px; padding: 0 2px 0 3px; }
.sel { background: #efefef; }
.scroll { width: 16px; flex: none; background: #efefef; display: flex; justify-content: center; margin-left: auto; }
.tree .thumb { width: 2px; height: 281px; margin-top: 17px; background: #808080; }
.hsplit { height: 6px; flex: none; background: #efefef; padding-left: 97px; }
.lib { height: 20px; flex: none; display: flex; align-items: center; padding-left: 7px; background: linear-gradient(#6d8aa6, #9ab0c5); border-bottom: 1px solid #29435e; box-shadow: inset 0 1px #5a7794; }
.lib svg:first-child { margin-right: 5px; }
.lib .x { margin-right: 1px; }
.sliver { height: 2px; flex: none; display: flex; gap: 18px; padding-left: 6px; }
.sliver i { width: 59px; background: #e2ebf3; }
.open { height: 21px; padding-top: 1px; background: linear-gradient(#c8daea, #fff 15%, #f4f9fd 50%, #c5d8e7); border-bottom: 1px solid #557594; box-shadow: none; }
.symbols { flex: 1; display: flex; min-height: 0; overflow: hidden; }
.grid { width: 233px; flex: none; margin-left: -1px; display: grid; grid-template-columns: 77px 77px 77px; grid-template-rows: 31px 70px 18px; }
.cap { display: flex; justify-content: center; line-height: 32px; padding-right: 1px; }
.low { line-height: 16px; }
.cell { width: 59px; height: 59px; margin-left: 7px; background: #e2ebf3; box-shadow: 2px 2px 2px #9fb1c1; }
.short { width: 2px; height: 52px; margin: 48px 0 0 1px; background: #808080; }
.vsplit { width: 6px; flex: none; background: #efefef; border-right: 1px solid #a5a5a5; padding-top: 286px; }
.right { flex: 1; display: flex; flex-direction: column; min-width: 0; }
.palette { height: 34px; flex: none; background: #c5d8e7; border-bottom: 1px solid #666; border-right: 1px solid #666; display: flex; gap: 3px; padding: 3px 0 0 4px; }
.palette svg { background: #e2ebf3; }
.doc { height: 566px; flex: none; padding-left: 138px; background: #efefef; overflow: hidden; }
.sheet { width: 835px; border-left: 1px solid #666; }
.hruler { height: 17px; width: 833px; display: flex; background: #fff; border-top: 1px solid #666; border-bottom: 1px solid #666; border-right: 1px solid #666; }
.corner { width: 16px; flex: none; border-right: 1px solid #666; }
.hruler text, .vruler text { font: 12px "Liberation Sans", Arial, sans-serif; }
.body { display: flex; height: 549px; width: 834px; border-right: 1px solid #000; }
.vruler, .canvas { background: #fff; }
.docscroll { flex: 1; background: #efefef; }
.dthumb { width: 2px; height: 268px; margin: 17px 0 0 7px; background: #808080; }
.status { height: 23px; flex: none; background: #efefef; border-bottom: 1px solid #8c8c8c; border-top: 1px solid #fff; display: flex; justify-content: flex-end; gap: 9px; padding: 3px 2px 0 0; font-size: 12px; }
.task { height: 48px; flex: none; display: flex; color: #fff; border-top: 1px solid #4e5a66; background: linear-gradient(90deg, #1f2b36 0, #1f2b37 210px, #132750 330px, #10224f 900px, #13254a 1010px, #1e2b3a 1070px, #1f2b36); }
.weather { width: 332px; flex: none; display: flex; padding: 11px 0 0 20px; gap: 9px; }
.weather div { display: flex; flex-direction: column; align-items: flex-start; margin-top: -4px; }
.weather b { font-weight: 600; font-size: 11.500px; }
.weather span { color: #c9cdd2; }
.apps { display: flex; flex: none; }
.app { width: 44px; padding: 7px 0 0 4px; display: flex; flex-direction: column; }
.app i { height: 3px; width: 6px; border-radius: 2px; margin: 0 0 0 15px; }
.run i { background: #98a2b8; }
.on { width: 40px; height: 41px; margin: 3px 2px 0; padding: 4px 0 0 2px; border: 1px solid #2e3c62; border-left-width: 0; border-radius: 4px; background: #223050; }
.on i { width: 16px; background: #4cc2ff; margin-left: 10px; }
.tray { flex: 1; display: flex; padding-left: 53px; }
.chev { margin: 18px 0 0; }
.cloud { margin: 17px 0 0 8px; }
.lang { width: 32px; margin: 8px 0 0 9px; display: flex; flex-direction: column; align-items: center; }
.net { margin: 14px 0 0 14px; }
.vol { margin: 15px 0 0 5px; }
.bat { margin: 17px 0 0 7px; }
.clock { width: 74px; margin: 7px 0 0; display: flex; flex-direction: column; align-items: flex-end; }
.count { width: 16px; height: 16px; border-radius: 50%; background: #4cc2ff; color: #112; font-weight: 400; font-size: 11px; text-align: center; margin: 15px 0 0 7px; }
</style>
